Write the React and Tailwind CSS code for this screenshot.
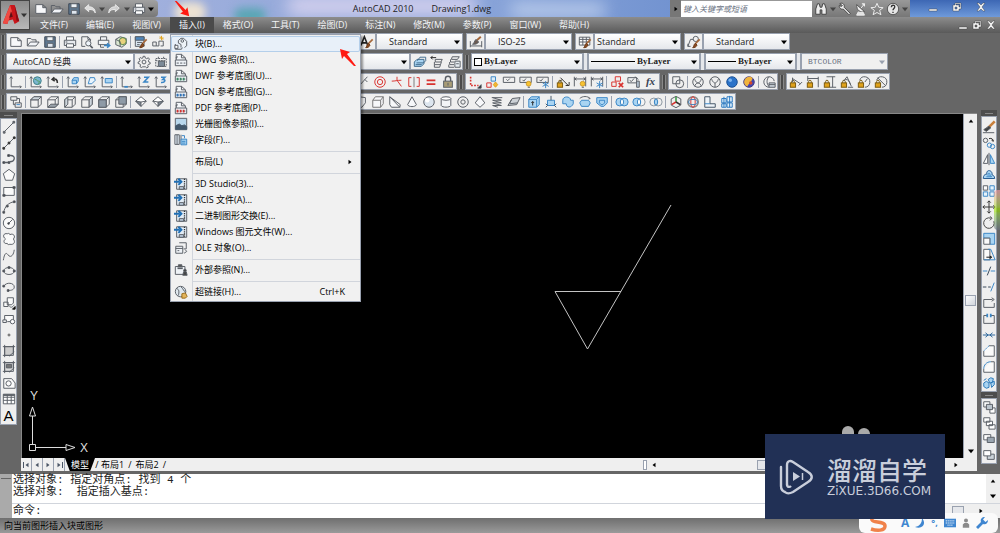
import clsx from 'clsx'

const BLUE = '#3a86c6'
const SKY = '#a9d4f2'
const RED = '#d8322f'
const GOLD = '#e0a21b'

const lock = <><rect x="1.5" y="9" width="6" height="5" fill={GOLD} stroke="#7a5a10" /><path d="M3 9V7.500a1.500 1.500 0 0 1 3 0V9" stroke="#7a5a10" /></>
const bulb = <><circle cx="11" cy="10" r="2.800" fill="#f7c233" stroke="#c08a12" strokeWidth="0.800" /><path d="M10 14h2.500" /></>
const snow = <path d="M11 7v8M7.500 9l7 4M14.500 9l-7 4" stroke={BLUE} />
const brush = <><path d="M14.500 5l-5 5" stroke="#a5673a" strokeWidth="2" /><path d="M9.500 9.500l2 2c-1 2.500-3 3-5 3 1.500-1 1-3.500 3-5z" fill="#8a4b22" stroke="#6a3918" /></>
const axes = <path d="M2.500 2v11.500H14M1 4l1.500-2L4 4M12.500 12l1.500 1.500-1.500 1.500" />
const cube = <><path d="M2 5.500h8.500V14H2zM2 5.500L5.500 2H14v8.500L10.500 14M10.500 5.500L14 2" /></>
const fileRef = <><path d="M2.500 8V1.500h6l4.500 4V8M8.500 1.500v4H13" fill="#f4f7fa" /><path d="M1.500 8h13v6.500h-13z" fill="#eef2f6" /><path d="M2.500 6.500V4.500h2M3 11.500h2.500M7 11.500h2.500M11 11.500h2" /></>
const importBox = <><path d="M3 2h11.500v12H3z" fill="#e3edf6" /><path d="M12 2v12" stroke="#333" strokeWidth="1.500" strokeDasharray="1.500 1" /><path d="M6 11h5v3H6z" fill="#bcd" /><path d="M0 5.500h6.500M5 2l3.500 3.500L5 9" stroke="#1f6fb5" strokeWidth="2.200" /></>

const ICONS = {
  new: <path d="M2 3h8l4 3.500V13H2zM10 3v3.500h4" fill="#f7f8fa" />,
  open: <><path d="M1.500 12.500V4h4l1.500 1.500h4.500V8" /><path d="M1.500 12.500L5 8h10l-3.500 4.500z" fill="#f2f4f8" /></>,
  save: <><path d="M2 2h12v12H2z" fill="#5f7890" stroke="#3d4754" /><path d="M4.500 2h7v4.500h-7z" fill="#edf2f7" /><path d="M5 9.500h6.500V14H5z" fill="#dfe6ee" /></>,
  undo: <path d="M6.500 3L2 7l4.500 4V8.500c4 0 6 .5 7.500 4 0-5-3-7-7.500-7z" fill="#dcdcdc" stroke="#e8e8e8" />,
  redo: <path d="M9.500 3L14 7l-4.500 4V8.500c-4 0-6 .5-7.500 4 0-5 3-7 7.500-7z" fill="#cfcfcf" stroke="#e8e8e8" />,
  print: <><path d="M4 6V2h8v4" fill="#fff" /><path d="M1.500 6h13v6h-13z" fill="#e7eaee" /><path d="M4 10h8v4H4z" fill="#fff" /><path d="M3 8h2" /></>,
  preview: <><path d="M2 13V2h7l3 3v2M9 2v3h3" /><path d="M2 13h4" /><circle cx="9.500" cy="9.500" r="3" fill="#eef4fa" /><path d="M11.500 12l3 3" strokeWidth="2" /></>,
  publish: <><path d="M4 6V2h7v4M1.500 6h12v5h-12zM4 11v3h4" fill="#f2f4f6" /><path d="M8 12h6M11.500 9.500L14.500 12l-3 2.500" stroke={BLUE} strokeWidth="1.800" /></>,
  box3d: <><path d="M2 5l5-3 7 2v6l-5 4-7-3z" fill="#dbe6d2" /><circle cx="10" cy="7" r="4" fill="#e9d27d" stroke="#55884c" /><path d="M2 5l5 2.500V13" /></>,
  match: <><path d="M1.500 2h10v11h-10z" fill="#d9e6f2" /><path d="M1.500 2h10v4h-10z" fill="#4f87bd" /><path d="M3.500 8.500h6M3.500 11h3" />{brush}</>,
  blockEdit: <><path d="M2 12.500V8h4v4.500zM6 12.500h3V7h5v5.500h-3" /><path d="M12 1v5M9.500 3.500h5M10.200 1.700l3.600 3.600" stroke={GOLD} /></>,
  gear: <><circle cx="8" cy="8" r="2.200" /><path d="M7 1.500h2l.5 2 1.500.7 2-1 1.200 1.500-1.200 1.800.3 1.300 1.700.7v1.700l-2 .5-.7 1.300.6 1.800-1.700 1-1.500-1.300H6.500L5 14.300l-1.600-1 .6-1.900-.8-1.200-1.900-.5V8l1.700-.6.4-1.400-1-1.700 1.300-1.400 1.800 1L6.800 3.300z" /></>,
  workspace: <><path d="M2 4h12v9H2zM2 6.500h12" strokeDasharray="2 1" /><path d="M5 7h7v6H5z" fill="#7b8a98" /><path d="M5 2v2M11 2v2" /></>,
  axes,
  axesGlobe: <>{axes}<circle cx="9.500" cy="6.500" r="4.500" fill="#79b5cf" stroke="#3d7f86" /><path d="M7 5c2 0 2 2 4 2s1 2-1 3" stroke="#4e9a54" /></>,
  axesBack: <>{axes}<path d="M13 9c0-4-2-5-5-4M9.500 2.500L7 5l3 2" strokeWidth="1.800" stroke="#333" /></>,
  axesFace: <>{axes}<path d="M7 6h5v4H7zM7 6l2-3h5v4l-2 3" fill={SKY} stroke={BLUE} /></>,
  axesObj: <>{axes}<path d="M8 3h5l1 3-4 4H6z" fill="#e8f4fd" stroke={BLUE} /></>,
  axesView: <>{axes}<path d="M6 4h8v5H6z" fill={SKY} stroke={BLUE} /></>,
  axesOrigin: <>{axes}<path d="M5 13.500h4" strokeWidth="2" stroke={BLUE} /></>,
  axesZ: <>{axes}<path d="M8 2.500h5L8 8h5" stroke={BLUE} strokeWidth="1.800" /></>,
  axes3: <>{axes}<path d="M8 2.500h4.500L10 5c4 0 3 4-2 3.500" stroke={BLUE} strokeWidth="1.800" /></>,
  views: <><path d="M2 2h7v4H2zM7 9h7v5H7zM5 6v5h2M9 4h3v5" /><path d="M8.500 11h4" stroke={BLUE} /></>,
  cubeTop: <>{cube}<path d="M2 5.500L5.500 2H14l-3.500 3.500z" fill="#cdd5dc" /></>,
  cubeBottom: <>{cube}<path d="M2 14l3.500-3.500H14L10.500 14z" fill="#9aa3ab" /></>,
  cubeLeft: <>{cube}<path d="M2 5.500L5.500 2v8.500L2 14z" fill="#cdd5dc" /></>,
  cubeRight: <>{cube}<path d="M10.500 5.500L14 2v8.500L10.500 14z" fill="#cdd5dc" /></>,
  cubeFront: <>{cube}<path d="M2 5.500h8.500V14H2z" fill="#8e9aa6" /></>,
  cubeBack: <>{cube}<path d="M5.500 2H14v8.500H5.500z" fill="#8e9aa6" /></>,
  isoA: <><path d="M8 2l6 5-6 6-6-6z" fill="#fff" /><path d="M2 7l6 1v5z" fill="#7d8790" /><path d="M8 8l6-1" /></>,
  isoB: <><path d="M8 2l6 5-6 6-6-6z" fill="#fff" /><path d="M14 7L8 8v5z" fill="#7d8790" /><path d="M8 8L2 7" /></>,
  textStyle: <><path d="M1 12L5 2l4 10M2.500 9h5" strokeWidth="1.800" stroke="#222" />{brush}</>,
  dimStyle: <><path d="M1.500 7v7M14.500 7v7M1.500 12.500h13" /><path d="M13.500 2L9 6" stroke="#a5673a" strokeWidth="2.200" /><path d="M8 5l3 3c-1 2-4 3-7 2.500 2-.5 2-4 4-5.500z" fill="#6b5a50" /></>,
  tableStyle: <><path d="M1.500 2.500h12v9h-12zM1.500 5h12M5.500 2.500v9M9.500 2.500v9M1.500 8h12" fill="#fff" />{brush}</>,
  leaderStyle: <><path d="M1 13L4 5h3M1 10v3h3" /><circle cx="10" cy="4.500" r="3" />{brush}</>,
  layers: <><path d="M1.500 13V8l3-3h8v5l-3 3z" fill={SKY} stroke="#416b8c" /><path d="M4 9h8M5 6.500l3-4h6.500v4l-3 3M3 11h7" stroke="#416b8c" /></>,
  layerPrev: <><path d="M6 5h8l-1.500 3H6zM5 8v3h7l1-3M5 11v3h6l1-3" /><path d="M1 3h6M3 1L1 3l2 2" stroke="#222" /></>,
  layerState: <><path d="M6 2h8l-2 3H5zM4 5v3h4M3 8v3h5M2 11v3h6" /><path d="M9 7h6v7H9zM10.500 10h3" fill="#e8eef3" /></>,
  slash: <path d="M1 9l3 3L13 2M10 5l3 3" />,
  concentric: <><circle cx="8" cy="8" r="6" stroke={RED} /><circle cx="8" cy="8" r="3" stroke={RED} /></>,
  smooth: <><path d="M2 7c4 0 6-1 11-1M8 2v4l5 7" stroke={RED} /></>,
  brackets: <><path d="M5 3H2v10h3M11 3h3v10h-3" stroke={RED} /><path d="M8 2v12" stroke="#777" /></>,
  equal: <path d="M3 6h10M3 10.500h10" stroke={RED} strokeWidth="2" />,
  padlock: <><path d="M5 7V4.500a3 3 0 0 1 6 0V7" strokeWidth="1.600" /><rect x="3" y="7" width="10" height="7" fill="#a89c76" /><path d="M8 9v3" /></>,
  infer: <><path d="M3 2v10h9" stroke={RED} strokeDasharray="2 1.500" strokeWidth="1.800" /><path d="M15 11v4h-4z" fill="#222" /></>,
  autoCons: <><path d="M7 2h5v5H7z" stroke={BLUE} fill="#dcedf9" /><path d="M2 9h5v5H2z" stroke={RED} /><path d="M12 8l2.500 3-2.500 3-2.500-3z" fill="#f3b533" stroke={GOLD} /></>,
  tag: <path d="M1.500 2.500h13v6h-13zM5 5l1.500 1.500L9 4" />,
  tagBulb: <><path d="M1 2.500h13v6H1zM4 5.500L5.500 7 8 4" />{bulb}</>,
  tagSnow: <><path d="M1 2.500h13v6H1zM4 5.500L5.500 7 8 4" />{snow}</>,
  dimLock: <>{lock}<path d="M5 3l9 9M7 5l-3 3M11 12h4v-4" stroke="#333" /></>,
  dimBulb: <><path d="M1.500 2v11M14.500 2v11M1.500 4.500h13M4 3L2 4.500 4 6M12 3l2 1.500L12 6" />{bulb}</>,
  dimSnow: <><path d="M1.500 2v11M14.500 2v11M1.500 4.500h13M4 3L2 4.500 4 6M12 3l2 1.500L12 6" />{snow}</>,
  consDel: <><path d="M6 2h6v5H6zM2 8h5v5H2z" stroke={RED} /><path d="M10 9l5 5M15 9l-5 5" stroke={RED} strokeWidth="2" /></>,
  consSet: <><path d="M1 3h10v6H1zM3 6l2 1.500L8 4" /><path d="M11 7h3v7h-3z" fill="#b8c8d6" /><path d="M9 2l4 3" /></>,
  mesh: <><path d="M2 2h8v8H2z" /><circle cx="10" cy="10" r="4.500" /></>,
  ballWire: <><circle cx="8" cy="8" r="6" /><path d="M4 4c1 4 3 5 4 5s3-1 4-5M8 9c-2 0-3 2-4 4M8 9c2 0 3 2 4 4" /></>,
  ballWire2: <><circle cx="8" cy="8" r="6" /><path d="M4 4c1 4 3 5 4 5s3-1 4-5M8 9v5" /></>,
  ballBlue: <><circle cx="8" cy="8" r="6" fill="#2b73c9" stroke="#1b4f92" /><circle cx="6" cy="6" r="2" fill="#7bb3ee" stroke="none" /></>,
  ballGold: <><circle cx="8" cy="8" r="6" fill="#3c48b8" stroke="#4a3a78" /><path d="M2.500 7C4 1 11 1 12 4c-1 4-4 5-6 9-2-1-4-3-3.500-6z" fill="#f0b43c" stroke="none" /><circle cx="10" cy="9" r="2" fill="#d2482c" stroke="none" /></>,
  viewMgr: <><path d="M8 14A6 6 0 1 1 14 7M8 2c-3 3-3 8 0 11" /><path d="M8 9h7v5H8zM8 11h7" fill="#cfd8e0" /></>,
  lockAligned: <>{lock}<path d="M4 3v5M4 4l9 6M11 12l4-4" /></>,
  lockHoriz: <>{lock}<path d="M2 1v6M14 2v12M2 4h12" /></>,
  lockVert: <>{lock}<path d="M4 2h10M8 14h7M11 2v12" /></>,
  lockAngle: <>{lock}<path d="M4 7l4-5 5 11M9 14h6M6 5c4 0 5 3 6 6" /></>,
  lockRadius: <>{lock}<path d="M3 6a6 6 0 1 1 6 8M9 8l3-4" /></>,
  lockDiam: <>{lock}<path d="M3 6a6 6 0 1 1 6 8M4 3l9 9" /></>,
  polysolid: <path d="M2 5l4-3 7 1v6l-4 5H6V8z" fill="#f5f6f8" />,
  box: <path d="M2 6l3-4h9v8l-3 4H2zM2 6h9v8M11 6l3-4" fill="#f7f8fa" stroke="#777" />,
  wedge: <path d="M2 2v9l2 3h9.500zM2 2l12 9-.5 3" fill="#f7f8fa" />,
  cone: <path d="M8 2l5 9c-1 3-9 3-10 0z" fill="#f7f8fa" />,
  sphere: <><circle cx="8" cy="8" r="6" fill="#dde6ef" /><circle cx="6" cy="6" r="2.500" fill="#fff" stroke="none" /></>,
  cylinder: <><path d="M2.500 4v8c1 2.500 10 2.500 11 0V4" fill="#f3f5f7" /><ellipse cx="8" cy="4" rx="5.500" ry="2" fill="#fff" /></>,
  torus: <><circle cx="8" cy="8" r="6" /><circle cx="8" cy="8" r="2.500" /></>,
  pyramid: <path d="M8 2L2.500 9 8 14l5.500-5z" fill="#f7f8fa" />,
  helix: <path d="M2 3h12M3 3l10 3H3l10 3H3l10 3H3l6 2" />,
  planar: <path d="M1 12L6 4l9-1-4 8zM5 5.500l-2 4M3 10l9-1" fill="#ccd1d6" />,
  extrude: <><path d="M2 5h9v9H2zM2 5l3-3h9v9l-3 3M11 5l3-3" fill={SKY} stroke={BLUE} /><path d="M6.500 12V7.500M5 9l1.500-1.500L8 9" stroke="#222" /></>,
  presspull: <><path d="M4 6h8v6H4z" fill={SKY} stroke={BLUE} /><path d="M8 1v5M4 12l-2 2M12 12l2 2M2 10l2 2M14 10l-2 2" stroke="#456" /></>,
  sweep: <path d="M2 6c0-5 9-5 9 0h3v4c-2 5-8 5-8 0H2z" fill={SKY} stroke={BLUE} />,
  revolve: <><path d="M2 9l2-3h8l2 3-2 4H4z" fill={SKY} stroke={BLUE} /><path d="M2 4c3-3 9-3 12 0l-2 .5" /></>,
  loft: <path d="M2 3h12v6l-4 4H7L2 9zM5 6h6v3l-2 2H7L5 9z" fill={SKY} stroke={BLUE} />,
  union: <><ellipse cx="5.500" cy="8" rx="4.500" ry="4.500" fill={SKY} stroke={BLUE} /><ellipse cx="10.500" cy="8" rx="4.500" ry="4.500" fill={SKY} stroke={BLUE} /><ellipse cx="8" cy="8" rx="1.800" ry="3.500" fill="#fff" stroke={BLUE} /></>,
  subtract: <><ellipse cx="10.500" cy="8" rx="4.500" ry="4.500" fill="#f4f4f4" stroke="#8a96a0" /><ellipse cx="5.500" cy="8" rx="4.500" ry="4.500" fill={SKY} stroke={BLUE} /><ellipse cx="8" cy="8" rx="1.800" ry="3.500" fill="#fff" stroke={BLUE} /></>,
  intersect: <><ellipse cx="5.500" cy="8" rx="4.500" ry="4.500" stroke="#8a96a0" /><ellipse cx="10.500" cy="8" rx="4.500" ry="4.500" stroke="#8a96a0" /><ellipse cx="8" cy="8" rx="1.800" ry="3.500" fill={SKY} stroke={BLUE} /></>,
  move3d: <><path d="M8 1.500l5.500 3v7L8 14.500l-5.500-3v-7z" /><path d="M8 2v6" stroke="#3a9b45" strokeWidth="1.800" /><path d="M8 8l-5 3" stroke={RED} strokeWidth="1.800" /><path d="M8 8l5 3" stroke="#333" strokeWidth="1.800" /></>,
  rotate3d: <><circle cx="8" cy="8" r="6" stroke="#888" strokeWidth="1.800" /><ellipse cx="8" cy="8" rx="2.500" ry="6" stroke={RED} /><ellipse cx="8" cy="8" rx="5" ry="3" stroke="#3a7ab8" /></>,
  align3d: <><path d="M2 2h6v8h6v4H2z" fill="#eef4f9" stroke="#456" /><path d="M2 10h6" stroke={BLUE} /></>,
  array3d: <><path d="M2 4h5v5H2zM8 2h6v6H8zM2 10h5v4H2zM8 9h6v5H8z" fill="#dff0fb" stroke="#2a78c0" /><path d="M4.500 2v12M11 1v13" stroke="#2a78c0" /></>,
  line: <><path d="M3 13L13 3" /><path d="M1.500 13h2v2h-2zM12.500 1.500h2v2h-2z" fill="#777" /></>,
  xline: <><path d="M2 14L14 2" /><path d="M1 13h2v2H1zM7 7h2v2H7zM13 1h2v2h-2z" fill="#333" stroke="#333" /></>,
  pline: <><path d="M2 12h6M7 4h3c6 0 5 7-1 7" strokeWidth="1.500" /><path d="M1 11h2v2H1zM7 11h2v2H7zM6.500 3h2v2h-2z" fill="#333" /></>,
  polygon: <path d="M8 1.500l6.500 5L12 14H4L1.500 6.500z" fill="#fafafa" />,
  rect: <><path d="M2 4h12v9H2z" fill="#fafafa" /><path d="M1 12h2.500v2H1zM12.500 3H15v2h-2.500z" fill="#444" /></>,
  arc: <><path d="M2 14C3 8 7 3 14 2" /><path d="M1 13h2v2H1zM5 6h2v2H5zM13 1h2v2h-2z" fill="#333" /></>,
  circle: <><circle cx="8" cy="8" r="6.500" fill="#fafafa" /><path d="M8 8l4-4" /><circle cx="7.500" cy="8.500" r="1" fill="#333" /></>,
  cloud: <path d="M4 8C0 5 2 1 6 2c2-1 3 0 3 1 4-2 7 2 4 5 3 4 0 7-4 6-2 1-3 0-3-1-4 1-5-3-2-5z" fill="#fafafa" />,
  spline: <path d="M1.500 14C3 5 5 5 7 8s6 2 7-6" />,
  ellipse: <><ellipse cx="8" cy="8" rx="6" ry="4" /><path d="M1 7h2v2H1zM13 7h2v2h-2zM7 3h2v2H7z" fill="#333" /></>,
  ellipseArc: <><path d="M2 7c3-5 12-4 12 1 0 3-3 4-7 4" /><path d="M1 6h2v2H1zM6 11h2v2H6z" fill="#333" /></>,
  insert: <><path d="M6 2h7v6l-2 2H6zM2 7h5v5H2zM8 11c2 3 4 2 6-1" fill="#fafafa" /><path d="M15 12v3h-3z" fill="#111" stroke="#111" /></>,
  makeBlock: <><path d="M3 4h10v7H6M3 4v5" fill="#fafafa" /><circle cx="12" cy="11" r="2.500" fill="#fff" /><path d="M1 9h4v3H1z" /></>,
  point: <circle cx="8" cy="8" r="1.200" fill="#777" stroke="#777" />,
  hatch: <><path d="M3 3h10v10H3z" fill="#ccc" /><path d="M1 3h14M1 13h9M3 1v14M13 1v9M8 14l6-5" /></>,
  gradient: <><path d="M3 3h10v10H3z" fill="#ddd" /><path d="M5 5h6v4H5z" fill="#777" /><path d="M1 3h14M1 13h9M3 1v14M13 1v9M8 14l6-5" /></>,
  region: <><path d="M2 3h9l4 5v6H2z" fill="#fafafa" /><circle cx="7.500" cy="8.500" r="3" /></>,
  table: <><path d="M1.500 2.500h13v11h-13zM1.500 6h13M1.500 9.500h13M6 3v10.500M10.500 3v10.500" fill="#fff" /><path d="M1.500 3.500h13" strokeWidth="2" /></>,
  erase: <><path d="M14.500 1.500L7 9" stroke="#c9803c" strokeWidth="3" /><path d="M8 7l2 2-5 4-3-2z" fill="#444" /><path d="M1 14.500h13" /></>,
  copy: <><circle cx="4" cy="5" r="2.500" /><path d="M8 3c3-1 5 1 5 3M13 6l-2-1" stroke="#222" /><circle cx="8.500" cy="10.500" r="2.500" stroke={BLUE} /><circle cx="12" cy="12" r="2.500" stroke={BLUE} /></>,
  mirror: <><path d="M6.500 3v10H1.500z" fill="#fafafa" /><path d="M9.500 3v10h5z" fill={SKY} stroke={BLUE} /><path d="M8 1v14" /></>,
  offset: <><path d="M1.500 12h13c0-3-2-4-3-4 1-6-7-7-6-1-3 0-4 2-4 5z" stroke="#245a90" fill={SKY} /><path d="M5 10h6c0-1-1-1-2-1 1-4-3-4-2 0" stroke={BLUE} /></>,
  array: <><path d="M1.500 2h5v5h-5z" fill="#fafafa" /><path d="M1.500 9h5v5h-5zM9 2h5v5H9zM9 9h5v5H9z" fill="#e6f3fc" stroke={BLUE} /></>,
  move: <path d="M8 1v14M1 8h14M6 3l2-2 2 2M6 13l2 2 2-2M3 6L1 8l2 2M13 6l2 2-2 2" stroke="#333" />,
  rotate: <path d="M10 2.500A6 6 0 1 0 13.500 6M9 .5l2.500 2L9 5" stroke="#444" />,
  scale: <><path d="M2 1.500h12.500V14H9V7H2z" fill={SKY} stroke={BLUE} /><path d="M2 7h7v7H2z" fill="#fafafa" /></>,
  stretch: <><path d="M2 1.500h7v12H2z" fill="#fafafa" /><path d="M7 1.500h3l5 12H2" stroke={BLUE} /><path d="M5 10.500h6M9 9l2 1.500L9 12" stroke="#111" /></>,
  trim: <><path d="M1 8h5M10 8h5" stroke={BLUE} /><path d="M6 13l4-10" stroke="#345" /></>,
  extend: <><path d="M1 8h4M7 8h3" stroke="#345" /><path d="M10 13l4-10" stroke={BLUE} /></>,
  breakPt: <path d="M12 4H2v9h12V8M11 2l3 2-3 2" />,
  breakAt: <><path d="M6 4H2v9h12V4h-4" /><path d="M6 2v4M10 2v4" stroke={BLUE} strokeWidth="2" /></>,
  join: <path d="M1 8h14M4 5.500L7 8l-3 2.500M12 5.500L9 8l3 2.500" stroke="#27639a" />,
  chamfer: <><path d="M8 2h6v12H2V8" fill="#fafafa" /><path d="M8 2L2 8" stroke={BLUE} strokeDasharray="2 1" /></>,
  fillet: <><path d="M10 2h4v12H2v-4" fill="#fafafa" /><path d="M10 2C5 2 2 6 2 10" stroke={BLUE} /></>,
  explode: <path d="M2 8l3-2 3 2v5l-3 1-3-2zM7 4l3-2 3 1-1 4-3 1zM10 8l4-2v4l-3 3zM2 5l3-2" fill={SKY} stroke="#2a78b8" />,
  orderTop: <><path d="M2 2h7v6H2zM9 9h6v6H9z" fill="#fff" /><path d="M5 5h7v6H5z" fill="#bcc5cd" /></>,
  orderMid: <><path d="M2 2h7v5H2zM5 6h7v5H5zM8 10h7v5H8z" fill="#fff" /></>,
  orderUp: <><path d="M2 3h8v6H2z" fill="#fff" /><path d="M6 6h8v6H6z" fill="#9ba6b0" /></>,
  orderDown: <><path d="M6 7h8v6H6z" fill="#ccd3d9" /><path d="M2 3h8v6H2z" fill="#fff" /></>,
  block: <><path d="M5 7V4l3-2.500h3L14.500 5v5L12 12M5 7l3 1.500V12" fill="#edf3f8" /><circle cx="9.500" cy="4.500" r="1.500" /><path d="M1.500 8v6h7l1-2" /><path d="M1 9.500h3.500V13H1z" fill="#fff" /></>,
  dwg: <>{fileRef}</>,
  dwf: <>{fileRef}<path d="M3 11.500h10" stroke="#3b8a63" strokeWidth="3" strokeDasharray="2 1.500" /></>,
  dgn: <>{fileRef}<path d="M3 11.500h10" stroke="#2c74bd" strokeWidth="3" strokeDasharray="2 1.500" /></>,
  pdf: <>{fileRef}<path d="M3 11.500h10" stroke={RED} strokeWidth="3" strokeDasharray="2 1.500" /></>,
  image: <><path d="M1.500 1.500h13v13h-13z" fill="#b8d7ec" /><path d="M2 14v-4l4-2 3 2 3-1 2.500 2v3z" fill="#42576b" stroke="#42576b" /></>,
  field: <><path d="M1 2h5v11H1zM3.500 2v11M8 2v11" fill="#e3edf6" /><path d="M8 7h6.500v6.500H8z" fill={SKY} stroke={BLUE} /><path d="M9 3h3v3M9 9.500h4M9 11.500h4" stroke={BLUE} /></>,
  import: importBox,
  ole: <><path d="M6 2h8v7h-3" /><path d="M2 6h8v8H2zM2 8.500h8" fill="#eef2f6" /><path d="M13 10l1.500 2-3 2M4 11h2" /></>,
  xref: <><path d="M1.500 4h11v9h-11z" fill="#eef2f6" /><path d="M5 4V2h4v2" fill="#555" /><path d="M4 6h6" strokeWidth="2" /><path d="M10 14l1-4h3l1 4z" fill="#444" /><circle cx="12.500" cy="8.500" r="1.500" fill="#444" /></>,
  hyperlink: <><circle cx="7.500" cy="7.500" r="6" fill="#dfe8ef" /><path d="M3 4c3 1 3 4 2 8M8 2c3 3 3 5 5 6" /><path d="M9 10l4-1 2 4-2 2H9z" fill="#e2b45c" stroke="#9a6b1a" /></>,
  binoculars: <path d="M2 14V8l2-6h2l1 4h2l1-4h2l2 6v6h-5v-5H7v5z" fill="#eee" stroke="#444" />,
  key: <path d="M2 2c3-2 6 1 5 4l7 7-1.500 1.500L6 8C3 9 1 6 1.500 4L4 5l1-1z" fill="#eee" stroke="#444" />,
  dish: <><path d="M3 3c0 7 4 9 9 8L3 3z" fill="#eee" stroke="#555" /><path d="M8 7l4-5M12 5V2H9M5 11l-2 4h9l-2-4" fill="#e2e2e2" stroke="#eee" /></>,
  star: <path d="M8 1.500l2 4.500 5 .5-4 3 1.500 5L8 12l-4.500 2.500L5 9.500l-4-3L6 6z" stroke="#eee" />,
  help: <><circle cx="8" cy="8" r="6.500" fill="#e6e6e6" stroke="#555" /><path d="M6 6c0-3 4-3 4-.5C10 7.500 8 7.500 8 9.500M8 11v1.500" stroke="#333" strokeWidth="1.500" /></>,
}

function Icon({ name, className = 'size-3.5' }) {
  return (
    <svg viewBox="0 0 16 16" fill="none" stroke="#5a5f66" strokeWidth="1.1" className={clsx('shrink-0', className)} aria-hidden="true">
      {ICONS[name]}
    </svg>
  )
}

function Triangle({ dir = 'down', className = 'fill-black' }) {
  const d = { down: 'M0 2h8L4 7z', up: 'M1 6h6L4 2z', left: 'M6 1v6L2 4z', right: 'M2 1v6l4-3z' }[dir]
  return <svg viewBox="0 0 8 8" className={clsx('size-1.5 shrink-0', className)} aria-hidden="true"><path d={d} /></svg>
}

// '|' in a tool list is a separator
function Tools({ items }) {
  return items.map((name, i) =>
    name === '|' ? (
      <span key={i} className="mx-px h-3 w-px shrink-0 bg-gray-400" />
    ) : (
      <button key={i} aria-label={name} className="flex h-4 w-[17px] shrink-0 items-center justify-center">
        {name === 'fx' ? <i className="font-['Liberation_Serif',serif] text-[11px] font-bold text-gray-700">fx</i> : <Icon name={name} />}
      </button>
    )
  )
}

function Strip({ items, className }) {
  return (
    <div className={clsx('flex h-[17px] shrink-0 items-center border border-gray-400 bg-[#efefef]', className)}>
      <Tools items={items} />
    </div>
  )
}

function Grip({ className = 'mx-0.5 w-1' }) {
  return <span className={clsx('h-3.5 shrink-0 border-x border-[#888] bg-[#4a4a4a]', className)} />
}

function LightGrip() {
  return <span className="h-[17px] w-[5px] shrink-0 border-x border-gray-400 bg-gray-200" />
}

function Combo({ label, value, className, selectClass = 'pl-3', children, disabled }) {
  return (
    <div
      className={clsx(
        'relative flex h-[17px] shrink-0 items-center border border-gray-400',
        disabled ? 'bg-[#f0f0f0]' : 'bg-linear-to-b from-white to-gray-200',
        className
      )}
    >
      {children}
      <select aria-label={label} disabled={disabled} className={clsx('h-full w-full min-w-0 appearance-none bg-transparent outline-none', selectClass)}>
        <option>{value}</option>
      </select>
      <Triangle className={clsx('pointer-events-none absolute right-0.5', disabled ? 'fill-gray-400' : 'fill-black')} />
    </div>
  )
}

const MENUS = ['文件(F)', '编辑(E)', '视图(V)', '插入(I)', '格式(O)', '工具(T)', '绘图(D)', '标注(N)', '修改(M)', '参数(P)', '窗口(W)', '帮助(H)']

const INSERT_MENU = [
  { icon: 'block', label: '块(B)...', active: true },
  { icon: 'dwg', label: 'DWG 参照(R)...' },
  { icon: 'dwf', label: 'DWF 参考底图(U)...' },
  { icon: 'dgn', label: 'DGN 参考底图(G)...' },
  { icon: 'pdf', label: 'PDF 参考底图(P)...' },
  { icon: 'image', label: '光栅图像参照(I)...' },
  { icon: 'field', label: '字段(F)...' },
  null,
  { label: '布局(L)', sub: true },
  null,
  { icon: 'import', label: '3D Studio(3)...' },
  { icon: 'import', label: 'ACIS 文件(A)...' },
  { icon: 'import', label: '二进制图形交换(E)...' },
  { icon: 'import', label: 'Windows 图元文件(W)...' },
  { icon: 'ole', label: 'OLE 对象(O)...' },
  null,
  { icon: 'xref', label: '外部参照(N)...' },
  null,
  { icon: 'hyperlink', label: '超链接(H)...', keys: 'Ctrl+K' },
]

function InsertMenu() {
  return (
    <div className="absolute top-full left-0 z-20 mt-px w-[191px] border border-gray-400 bg-[#f1f1f1] py-px text-black shadow-[2px_2px_2px_#0006]">
      <span className="absolute inset-y-0 left-[21px] border-l border-gray-300" />
      {INSERT_MENU.map((item, i) =>
        item ? (
          <button
            key={i}
            className={clsx(
              'relative flex h-4 w-full items-center pr-[7px] pl-[3px] text-left',
              item.active && 'rounded-xs bg-[#e8f0f9] ring-1 ring-[#b4cfea] ring-inset'
            )}
          >
            <span className="w-[21px]">{item.icon && <Icon name={item.icon} />}</span>
            <span className="flex-1 whitespace-nowrap">{item.label}</span>
            {item.keys && <span className="pr-2">{item.keys}</span>}
            {item.sub && <Triangle dir="right" />}
          </button>
        ) : (
          <div key={i} className="flex h-1.5 items-center pl-[22px]"><hr className="w-full border-gray-300" /></div>
        )
      )}
    </div>
  )
}

function RedArrow({ className }) {
  return (
    <svg viewBox="0 0 20 20" className={clsx('pointer-events-none absolute z-30', className)} aria-hidden="true">
      <path d="M2 1l2 0 10 10 2-3 2 10-10-3 3-2z" fill="#ff1a12" />
    </svg>
  )
}

function Header() {
  return (
    <header className="flex bg-[#555]">
      <button aria-label="AutoCAD" className="flex h-[30px] w-[30px] shrink-0 items-center border border-[#444] bg-linear-to-b from-[#8b8b8b] to-[#b9b9b9]">
        <svg viewBox="0 0 22 26" className="h-6 w-5 shrink-0">
          <path d="M2 22L10 2h5l5 18-5 3-2-5-5 1-1 4z" fill="#c9161b" />
          <path d="M10 2L2 22l5 1 5-14z" fill="#ef4b43" />
          <path d="M11 9l2 6-4 1z" fill="#5d1013" />
          <path d="M15 2l5 18-3-1z" fill="#8a0d12" />
        </svg>
        <Triangle className="fill-[#333]" />
      </button>
      <div className="min-w-0 flex-1">
        <div className="flex h-[17px] bg-linear-to-r from-[#a9b4de] via-[#86a2d8] to-[#4a74c0]">
          <div className="flex w-32 shrink-0 items-center justify-between rounded-r-sm bg-linear-to-b from-[#a2a2a2] to-[#777] px-1">
            <Icon name="new" /><Icon name="open" /><Icon name="save" />
            <Icon name="undo" /><Triangle className="fill-[#444]" />
            <Icon name="redo" /><Triangle className="fill-[#444]" />
            <Icon name="print" /><Triangle />
          </div>
          <div className="relative flex min-w-0 flex-1 items-center justify-center gap-[18px] overflow-hidden pl-4 text-[9px] whitespace-nowrap text-[#222]">
            <span className="absolute top-0.5 left-4 h-5 w-8 rounded-full bg-[#eee3d2] blur-xs" />
            <span className="absolute top-2 left-19 h-4 w-8 rounded-full bg-[#5aa6b4] blur-xs" />
            <span className="absolute -top-1 left-32 h-5 w-48 rounded-full bg-[#d3d0ee] blur-sm" />
            <span className="absolute top-1 left-88 h-3 w-24 rounded-full bg-[#c3d3ee] blur-sm" />
            <span className="relative">AutoCAD 2010</span>
            <span className="relative">Drawing1.dwg</span>
          </div>
          <div className="flex w-60 shrink-0 items-center bg-linear-to-b from-[#999] to-[#777]">
            <button aria-label="Expand" className="flex h-full w-[11px] items-center justify-center bg-[#777]"><Triangle dir="right" /></button>
            <input aria-label="Search" placeholder="键入关键字或短语" className="h-4 w-[131px] bg-white px-0.5 text-[8px] italic outline-none placeholder:text-gray-500" />
            <div className="flex flex-1 items-center justify-between px-0.5">
              <Icon name="binoculars" /><Triangle className="fill-[#444]" />
              <Icon name="key" /><Icon name="dish" /><Icon name="star" /><Icon name="help" /><Triangle className="fill-[#444]" />
            </div>
          </div>
          <div className="flex w-[90px] shrink-0 items-start justify-end gap-3.5 bg-linear-to-b from-[#3d67b4] to-[#6f9ada] pt-0.5 pr-3.5">
            <WindowButtons />
          </div>
        </div>
        <nav className="flex h-4 items-center bg-linear-to-b from-[#8d8d8d] to-[#5a5a5a] pl-px text-[9px] text-gray-100">
          {MENUS.map((m) => (
            <div key={m} className={clsx('relative h-full', m === '插入(I)' && 'bg-[#4a4a4a]')}>
              <button className="h-full px-[9px] whitespace-nowrap">{m}</button>
              {m === '插入(I)' && <InsertMenu />}
            </div>
          ))}
          <div className="ml-auto flex items-center gap-1 pr-1"><WindowButtons /></div>
        </nav>
      </div>
    </header>
  )
}

function WindowButtons() {
  return [
    ['Minimize', 'M1 7h8v2H1z'],
    ['Restore', 'M3 1h6v6H7v2H1V3h2zM3 5v2h2V5zM4 3h3v2h1V2H4z'],
    ['Close', 'M1 1h2l2 2 2-2h2L6 5l3 4H7L5 7 3 9H1l3-4z'],
  ].map(([label, d]) => (
    <button key={label} aria-label={label}>
      <svg viewBox="0 0 10 10" className="size-2.5"><path d={d} fill="#f4f4f4" stroke="#333" strokeWidth="0.4" fillRule="evenodd" /></svg>
    </button>
  ))
}

const BYLAYER = "pl-0.5 font-['Liberation_Serif',serif] font-bold"

function Toolbars() {
  return (
    <div className="flex flex-col gap-[3px] overflow-hidden bg-[#666] text-[9px] text-[#222]">
      <div className="flex items-center">
        <Grip className="mx-px w-1" />
        <Strip items={['new', 'open', 'save', '|', 'print', 'preview', 'publish', 'box3d', '|', 'match', 'blockEdit']} className="w-[351px]" />
        <Strip items={['textStyle']} />
        <Combo label="Text style" value="Standard" className="mr-[3px] w-[87px]" />
        <Strip items={['dimStyle']} />
        <Combo label="Dimension style" value="ISO-25" className="mr-[3px] w-[87px]" />
        <Strip items={['tableStyle']} />
        <Combo label="Table style" value="Standard" className="mr-[3px] w-[87px]" selectClass="pl-0.5" />
        <Strip items={['leaderStyle']} />
        <Combo label="Multileader style" value="Standard" className="w-[87px]" />
      </div>
      <div className="flex items-center">
        <Grip className="mx-px w-1" />
        <Combo label="Workspace" value="AutoCAD 经典" className="w-[128px]" selectClass="pl-1.5" />
        <Strip items={['gear', 'workspace']} />
        <Grip />
        <Combo label="Layer" value="0" className="w-[232px]" />
        <Strip items={['layers', 'layerPrev', 'layerState']} />
        <Grip />
        <Combo label="Color" value="ByLayer" className="w-[112px] pl-0.5" selectClass={BYLAYER}>
          <span className="size-2 shrink-0 border border-black bg-white" />
        </Combo>
        <LightGrip />
        <Combo label="Linetype" value="ByLayer" className="w-[112px] pl-0.5" selectClass={BYLAYER}>
          <span className="w-11 shrink-0 border-t border-black" />
        </Combo>
        <LightGrip />
        <Combo label="Lineweight" value="ByLayer" className="w-[91px] pl-0.5" selectClass={BYLAYER}>
          <span className="w-7 shrink-0 border-t border-black" />
        </Combo>
        <LightGrip />
        <Combo label="Plot style" value="BTCOLOR" disabled className="w-[87px]" selectClass="pl-1.5 font-['Liberation_Mono',monospace] text-[8px] text-gray-500" />
      </div>
      <div className="flex items-center">
        <Grip className="mx-px w-1" />
        <Strip items={['axes', '|', 'axesGlobe', 'axesBack', '|', 'axesFace', 'axesObj', 'axesView', '|', 'axesOrigin', 'axesZ', 'axes3']} className="w-[347px]" />
        <Strip items={['slash', 'concentric', 'smooth', 'brackets', 'equal', 'padlock']} />
        <Grip />
        <Strip items={['infer', 'autoCons', 'tag', 'tagBulb', 'tagSnow', '|', 'dimLock', 'dimBulb', 'dimSnow', '|', 'consDel', 'consSet', 'fx']} />
        <Grip />
        <Strip items={['mesh', '|', 'ballWire', 'ballWire2', 'ballBlue', 'ballGold', '|', 'viewMgr']} />
        <Grip />
        <Strip items={['lockAligned', 'lockHoriz', 'lockVert', 'lockAngle', 'lockRadius', 'lockDiam']} />
      </div>
      <div className="flex items-center">
        <Grip className="mx-px w-1" />
        <Strip items={['views', '|', 'cubeTop', 'cubeBottom', 'cubeLeft', 'cubeRight', 'cubeFront', 'cubeBack', '|', 'isoA', 'isoB']} className="w-[345px]" />
        <Strip
          items={[
            'polysolid', 'box', 'wedge', 'cone', 'sphere', 'cylinder', 'torus', 'pyramid', 'helix', 'planar', '|',
            'extrude', 'presspull', 'sweep', 'revolve', 'loft', '|', 'union', 'subtract', 'intersect', '|',
            'move3d', 'rotate3d', 'align3d', 'array3d',
          ]}
        />
      </div>
    </div>
  )
}

const DRAW = ['line', 'xline', 'pline', 'polygon', 'rect', 'arc', 'circle', 'cloud', 'spline', 'ellipse', 'ellipseArc', 'insert', 'makeBlock', 'point', 'hatch', 'gradient', 'region', 'table']
const MODIFY = ['erase', 'copy', 'mirror', 'offset', 'array', 'move', 'rotate', 'scale', 'stretch', 'trim', 'extend', 'breakPt', 'breakAt', 'join', 'chamfer', 'fillet', 'explode']
const ORDER = ['orderTop', 'orderMid', 'orderUp', 'orderDown']

function SideGrip() {
  return <span className="flex h-1.5 w-full items-center bg-[#4d4d4d] px-1"><span className="w-full border-t border-[#888]" /></span>
}

function Canvas() {
  return (
    <div className="relative min-w-0 flex-1 overflow-hidden bg-black">
      <svg className="absolute top-[90px] left-[532px] h-[146px] w-[120px]" viewBox="0 0 120 146" fill="none" stroke="#c4c4c4">
        <path d="M117 1L33.500 145 1 87.500h66" />
      </svg>
      <svg className="absolute bottom-0 left-0 h-[70px] w-20" viewBox="0 0 80 70" fill="none" stroke="#ddd">
        <path d="M7.500 56.500h6v6h-6zM10.500 56V28M7.500 28l3-9 3 9zM14 59.500h30M44 56.500l9 3-9 3z" />
        <g fill="#ddd" stroke="none" className="font-['Liberation_Sans',sans-serif] text-[12px]">
          <text x="8" y="12">Y</text>
          <text x="58" y="64">X</text>
        </g>
      </svg>
    </div>
  )
}

function Workspace() {
  return (
    <main className="flex flex-1 gap-1 bg-[#666]">
      <aside className="w-[17px] shrink-0 pt-0.5">
        <SideGrip />
        <div className="flex flex-col items-center border border-gray-400 bg-[#efefef]">
          <Tools items={DRAW} />
          <button aria-label="Text" className="h-[17px] font-['Liberation_Sans',sans-serif] text-[15px] leading-none text-black">A</button>
        </div>
      </aside>
      <section className="flex min-w-0 flex-1 flex-col pt-[3px]">
        <div className="flex flex-1 border-t border-l border-[#888]">
          <Canvas />
          <div className="flex w-3.5 shrink-0 flex-col items-center justify-between border-l border-gray-400 bg-[#efefef] py-1">
            <Triangle dir="up" />
            <span className="mt-7 size-[11px] border border-gray-400 bg-linear-to-br from-white to-gray-300" />
            <Triangle dir="down" />
          </div>
        </div>
        <div className="flex h-[13px] items-center bg-[#efefef] text-[9px] leading-3 text-black">
          {['left', 'left', 'right', 'right'].map((d, i) => (
            <button key={i} aria-label="Scroll tabs" className="flex h-full w-[11px] items-center justify-center border-r border-gray-400">
              {i === 0 && <span className="h-1.5 w-px bg-gray-600" />}
              <Triangle dir={d} className="fill-gray-600" />
              {i === 3 && <span className="h-1.5 w-px bg-gray-600" />}
            </button>
          ))}
          <button className="h-full bg-black px-1.5 text-white [clip-path:polygon(0_0,100%_0,84%_100%,16%_100%)]">模型</button>
          <span className="w-1 text-center">/</span>
          <button className="px-0.5">布局1</button>
          <span className="px-0.5">/</span>
          <button className="px-0.5">布局2</button>
          <span className="px-0.5">/</span>
          <div className="ml-auto flex h-full w-[334px] items-center">
            <span className="h-2.5 w-1 border border-gray-400 bg-white" />
            <Triangle dir="left" className="ml-1 fill-black" />
            <span className="ml-25 h-2.5 w-3 border border-gray-400 bg-gray-200" />
            <Triangle dir="right" className="mr-4.5 ml-auto fill-black" />
          </div>
        </div>
      </section>
      <aside className="relative w-[19px] shrink-0 pr-[3px]">
        <SideGrip />
        <div className="flex flex-col items-center border border-gray-400 bg-[#efefef] pt-0.5"><Tools items={MODIFY} /></div>
        <SideGrip />
        <div className="flex flex-col items-center border border-gray-400 bg-[#efefef]"><Tools items={ORDER} /></div>
        <span className="absolute top-20 right-0 h-10 w-1.5 rounded-l-sm bg-linear-to-b from-rose-300 via-lime-400 to-gray-500 opacity-60" />
      </aside>
    </main>
  )
}

function CommandLine() {
  return (
    <section className="mt-[3px] flex h-11 shrink-0 bg-white font-['Liberation_Mono','Noto_Sans_CJK_SC',monospace] text-[11px] leading-3 text-[#222]">
      <div className="w-3 shrink-0 bg-[#aaa] px-px pt-1"><span className="block h-px bg-[#666]" /></div>
      <div className="flex min-w-0 flex-1 flex-col">
        <div className="flex flex-1 border-b border-gray-300">
          <div className="flex-1 pl-px whitespace-pre">
            <p>选择对象: 指定对角点: 找到 4 个</p>
            <p>选择对象:  指定插入基点:</p>
          </div>
          <div className="flex w-3.5 flex-col items-center justify-between bg-[#efefef] py-1"><Triangle dir="up" /><Triangle /></div>
        </div>
        <div className="flex h-3.5 items-center pl-px">
          <label htmlFor="cmd">命令:</label>
          <input id="cmd" className="ml-1 min-w-0 flex-1 outline-none" />
          <div className="flex h-full w-24 items-center justify-between bg-[#efefef] pr-4">
            <Triangle dir="left" />
            <span className="ml-7 h-2.5 w-3 border border-gray-400 bg-gray-200" />
            <Triangle dir="right" />
          </div>
        </div>
      </div>
    </section>
  )
}

function Watermark() {
  return (
    <div className="absolute right-[55px] bottom-3.5 z-20 h-[85px] w-[180px]">
      <span className="absolute -top-2 left-[77px] h-3.5 w-3 rounded-full bg-[#aaa]" />
      <span className="absolute -top-1.5 left-[93px] h-3.5 w-3 rounded-full bg-[#aaa]" />
      <div className="relative flex h-full items-center gap-3 bg-[#213055] pl-3.5 text-[#c9cedb]">
        <svg viewBox="0 0 36 36" className="size-9 shrink-0" fill="none" stroke="currentColor" strokeWidth="2.4">
          <path d="M8 25V6c0-4 3-5 6-3l15 10c5 3 5 7 0 10L14 33c-4 2-7 1-8 0-3-1-4-3-4-6V8" strokeLinecap="round" />
          <path d="M8 25c0 4 3 3 4 2" />
          <path d="M14 13v9l7-4.500z" fill="currentColor" stroke="none" />
          <path d="M23.500 14v7" strokeWidth="1.500" />
        </svg>
        <div>
          <p className="font-['Noto_Sans_CJK_SC',sans-serif] text-[25px] leading-6 font-medium whitespace-nowrap">溜溜自学</p>
          <p className="mt-1 font-['DejaVu_Sans',sans-serif] text-[12px] leading-3 whitespace-nowrap">ZiXUE.3D66.COM</p>
        </div>
      </div>
    </div>
  )
}

function InputMethodBar() {
  return (
    <div className="absolute right-0.5 bottom-0 z-10 flex h-5 w-[139px] items-center gap-1.5 rounded-md bg-[#fafafa] px-2 text-[#3f86d0]">
      <svg viewBox="0 0 22 20" className="h-5 w-6 shrink-0" fill="none" stroke="#f0824a" strokeWidth="3.500">
        <path d="M18 3C8 1 3 4 4 7s13 1 13 6-8 5-14 3" />
      </svg>
      <b className="pl-1 text-[12px] leading-4">A</b>
      <svg viewBox="0 0 10 10" className="size-2.5 shrink-0" fill="currentColor"><path d="M7 0c5 6 0 12-7 9 5-1 7-4 7-9z" /></svg>
      <b className="text-[9px] leading-3">°,</b>
      <svg viewBox="0 0 14 10" className="h-2.5 w-3 shrink-0"><path d="M0 0h14v10H0z" fill="currentColor" /><path d="M2 2.500h10M2 5h10M4 7.500h6" stroke="#fff" strokeDasharray="1.500 .7" /></svg>
      <svg viewBox="0 0 10 12" className="h-3 w-2 shrink-0" fill="#8b8b8b"><circle cx="5" cy="3" r="2.500" /><path d="M1 12V8l2-2h4l2 2v4z" /></svg>
      <svg viewBox="0 0 12 12" className="size-3 shrink-0" fill="currentColor"><path d="M0 10l5-5c-1-3 1-5 4-5L7 2.500 9.500 5 12 3c0 3-2 5-5 4l-5 5z" /></svg>
    </div>
  )
}

export default function App() {
  return (
    <div className="relative flex min-h-screen flex-col overflow-hidden bg-[#666] font-['Open_Sans','Noto_Sans_CJK_SC',sans-serif]">
      <Header />
      <Toolbars />
      <Workspace />
      <CommandLine />
      <footer className="flex h-[15px] shrink-0 items-center bg-linear-to-b from-[#6f6f6f] to-[#9a9a9a] pl-1 text-[9px] text-black">
        向当前图形插入块或图形
      </footer>
      <RedArrow className="top-0 left-[173px] size-[18px]" />
      <RedArrow className="top-[47px] left-[338px] size-5 rotate-180" />
      <Watermark />
      <InputMethodBar />
    </div>
  )
}
